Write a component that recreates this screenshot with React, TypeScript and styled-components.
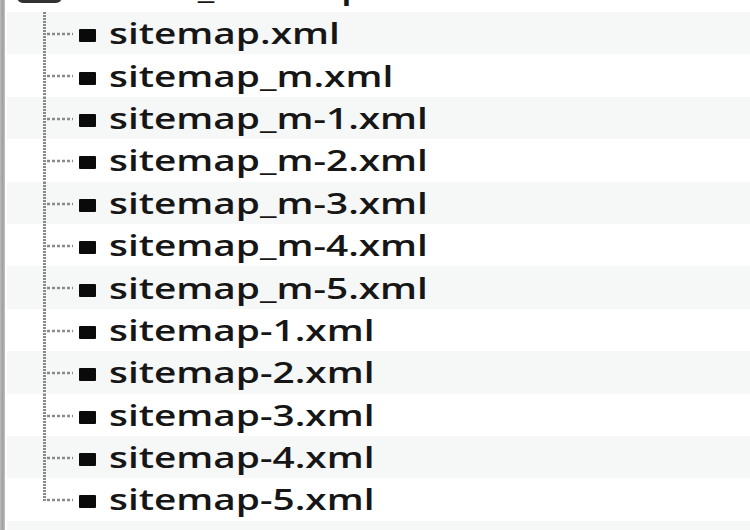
import React from "react";
import styled, { createGlobalStyle } from "styled-components";

const GlobalStyle = createGlobalStyle`
  html, body {
    margin: 0;
    padding: 0;
    background: #ffffff;
    overflow: hidden;
  }
`;

const ROW_H = 42.4;

const Frame = styled.div`
  display: flex;
  width: 750px;
  height: 530px;
  overflow: hidden;
  background: #ffffff;
`;

const SideEdge = styled.div`
  flex: none;
  width: 5px;
  background: linear-gradient(to right, #bdbdbd, #9e9e9e 55%, #c4c4c4);
  margin-right: 2px;
`;

const Tree = styled.div`
  flex: 1;
  display: flex;
  flex-direction: column;
  margin-top: -30.4px;
`;

const Row = styled.div<{ $alt?: boolean }>`
  flex: none;
  display: flex;
  align-items: center;
  height: ${ROW_H}px;
  background: ${(p) => (p.$alt ? "#f6f7f7" : "#ffffff")};
`;

const FolderBox = styled.span`
  flex: none;
  width: 45px;
  height: 22px;
  margin: 2.4px 0 0 10px;
  border-radius: 6px;
  background: linear-gradient(#5a5a5a, #2f2f2f);
`;

const Connector = styled.svg`
  flex: none;
  align-self: stretch;
  width: 71px;
  height: ${ROW_H}px;
`;

const Bullet = styled.span`
  flex: none;
  width: 17px;
  height: 13px;
  margin: 5px 0 0 1px;
  background: #0a0a0a;
  border-radius: 1px;
`;

const Label = styled.span<{ $indent: number; $lift?: number }>`
  flex: none;
  display: inline-block;
  margin-left: ${(p) => p.$indent}px;
  font-family: "Open Sans", "Noto Sans", "DejaVu Sans", sans-serif;
  font-size: 28px;
  font-weight: 600;
  line-height: 42px;
  color: #161616;
  white-space: nowrap;
  transform: translateY(${(p) => -(p.$lift ?? 0)}px) scaleX(1.385);
  transform-origin: left center;
`;

const files = [
  "sitemap.xml",
  "sitemap_m.xml",
  "sitemap_m-1.xml",
  "sitemap_m-2.xml",
  "sitemap_m-3.xml",
  "sitemap_m-4.xml",
  "sitemap_m-5.xml",
  "sitemap-1.xml",
  "sitemap-2.xml",
  "sitemap-3.xml",
  "sitemap-4.xml",
  "sitemap-5.xml",
];

const BranchLines: React.FC<{ last: boolean }> = ({ last }) => {
  const mid = 22;
  return (
    <Connector viewBox={`0 0 71 ${ROW_H}`} aria-hidden="true">
      <line
        x1={37.5}
        y1={0}
        x2={37.5}
        y2={last ? mid + 1 : ROW_H}
        stroke="#8a8a8a"
        strokeWidth={3}
        strokeDasharray="2 1"
      />
      <line
        x1={40}
        y1={mid}
        x2={66}
        y2={mid}
        stroke="#8a8a8a"
        strokeWidth={2.4}
        strokeDasharray="3 2"
      />
    </Connector>
  );
};

export default function App() {
  return (
    <>
      <GlobalStyle />
      <Frame>
        <SideEdge />
        <Tree>
          <Row>
            <FolderBox />
            <Label $indent={7} $lift={3}>
              mobile_sitemap
            </Label>
          </Row>
          {files.map((name, i) => (
            <Row key={name} $alt={i % 2 === 0}>
              <BranchLines last={i === files.length - 1} />
              <Bullet />
              <Label $indent={13}>{name}</Label>
            </Row>
          ))}
          <Row $alt />
        </Tree>
      </Frame>
    </>
  );
}
